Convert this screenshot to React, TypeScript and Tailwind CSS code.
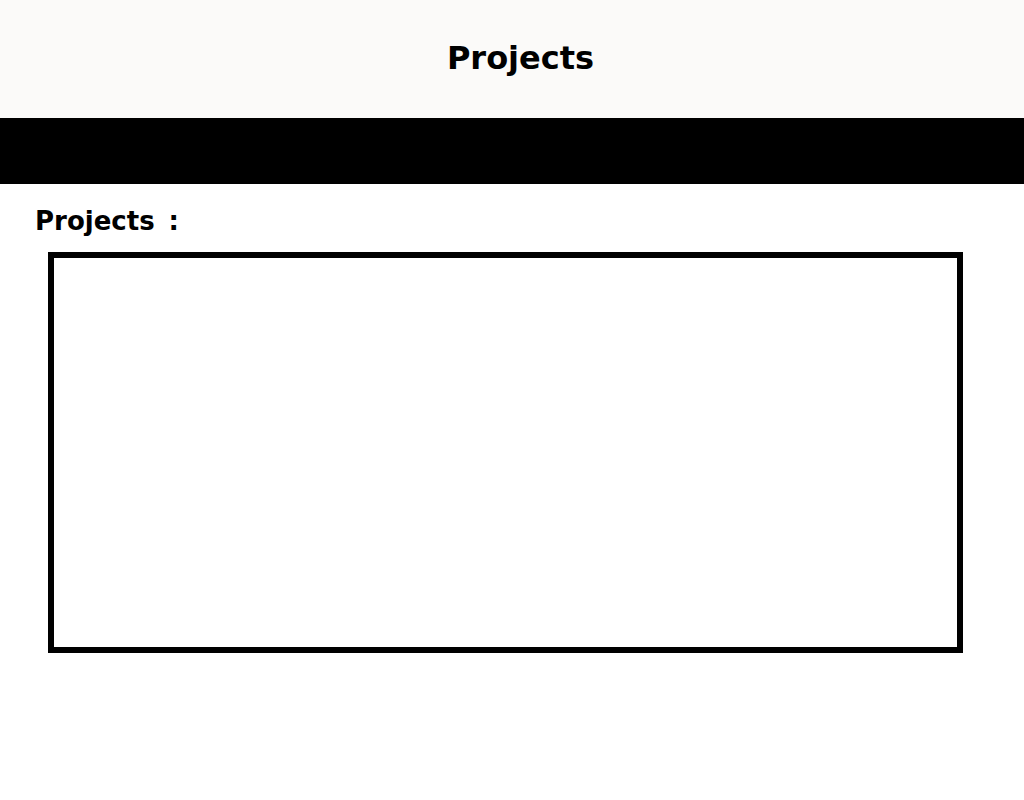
export default function App() {
    return (
        <div className="min-h-[800px] bg-white" style={{ fontFamily: '"DejaVu Sans", Verdana, sans-serif' }}>
            <header className="h-[118px] bg-[#fbfaf9] flex items-center justify-center pl-[17px] pb-[2px]">
                <h1 className="text-[32px] font-bold text-black">Projects</h1>
            </header>
            <div className="h-[66px] bg-black" />
            <section className="pt-[21px] pl-[35px]">
                <h2 className="text-[26px] font-bold text-black leading-[32px]">
                    Projects<span className="ml-[14px]">:</span>
                </h2>
                <div className="ml-[13px] mt-[15px] w-[915px] h-[401px] border-[6px] border-black" />
            </section>
        </div>
    );
}
